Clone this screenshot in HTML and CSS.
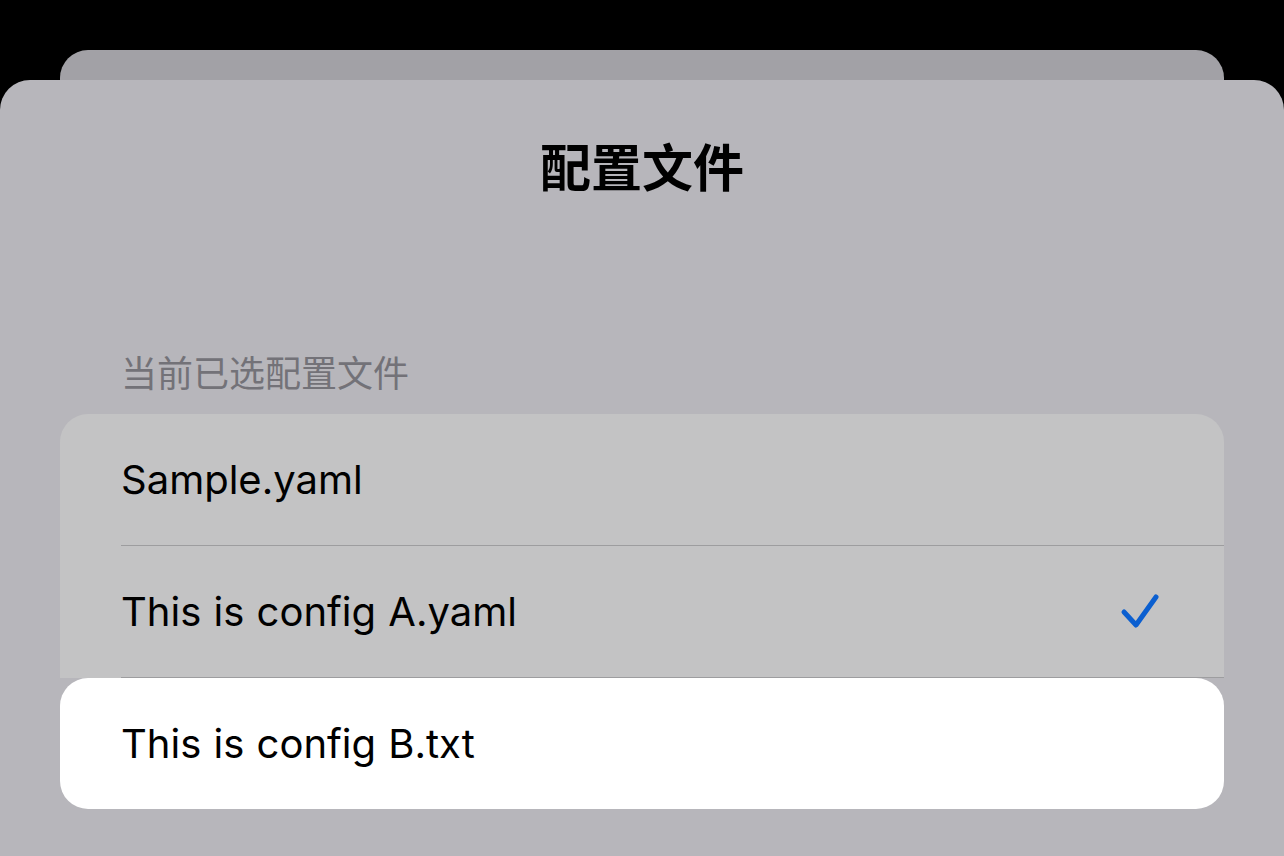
FILE: index.html
```html
<!DOCTYPE html>
<html lang="zh-CN">
<head>
<meta charset="utf-8">
<title>配置文件</title>
<link rel="stylesheet" href="styles.css">
</head>
<body>
  <div class="back-card"></div>
  <main class="sheet">
    <h1 class="title">配置文件</h1>
    <div class="section-label">当前已选配置文件</div>
    <div class="group">
      <div class="row">
        <div class="row-inner"><span class="row-text">Sample.yaml</span></div>
      </div>
      <div class="row">
        <div class="row-inner">
          <span class="row-text">This is config A.yaml</span>
          <svg class="check" width="40" height="40" viewBox="0 0 40 40" aria-hidden="true">
            <path d="M4 20 L16 33 L36 5" fill="none" stroke="#0b5fd0" stroke-width="5" stroke-linecap="round" stroke-linejoin="round"/>
          </svg>
        </div>
      </div>
    </div>
    <div class="row lifted">
      <div class="row-inner last"><span class="row-text">This is config B.txt</span></div>
    </div>
  </main>
</body>
</html>
```

FILE: styles.css
```css
html, body {
  margin: 0;
  padding: 0;
  background: #000;
  height: 100%;
  overflow: hidden;
}

body {
  padding-top: 50px;
  box-sizing: border-box;
  font-family: Inter, "Noto Sans CJK SC", sans-serif;
  color: #000;
}

.back-card {
  height: 30px;
  margin: 0 60px;
  background: #a2a1a6;
  border-radius: 28px 28px 0 0;
}

.sheet {
  background: #b7b6bb;
  border-radius: 30px 30px 0 0;
  min-height: 776px;
  padding-top: 55px;
  box-sizing: border-box;
}

.title {
  margin: 0;
  text-align: center;
  font-family: "Noto Sans CJK SC", sans-serif;
  font-size: 51px;
  font-weight: 700;
  line-height: 60px;
}

.section-label {
  margin: 154px 0 21px 121px;
  font-family: "Noto Sans CJK SC", sans-serif;
  font-size: 36px;
  line-height: 44px;
  color: #737278;
}

.group {
  margin: 0 60px;
  background: #c3c3c4;
  border-radius: 28px 28px 0 0;
}

.row {
  padding-left: 61px;
}

.row-inner {
  height: 131px;
  display: flex;
  align-items: center;
  justify-content: space-between;
  padding-right: 64px;
  border-bottom: 1px solid #9d9d9f;
}

.row-inner.last {
  border-bottom: none;
}

.row-text {
  font-size: 40px;
  letter-spacing: 0;
  word-spacing: 1px;
}

.check {
  display: block;
}

.lifted {
  margin: 0 60px;
  background: #fff;
  border-radius: 28px;
}
```
